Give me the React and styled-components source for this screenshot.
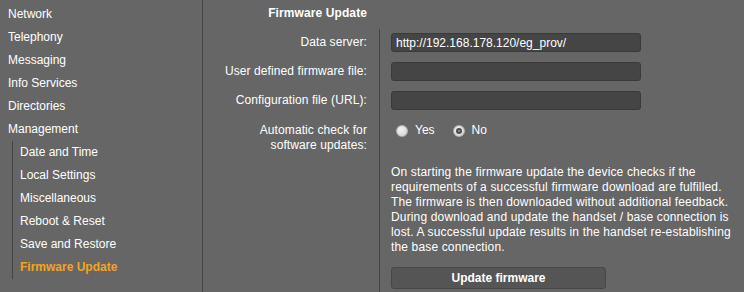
import { Fragment } from "react"
import { createGlobalStyle, styled, css } from "styled-components"

const bg = '#666666';
const line = '#444444';
const text = '#ffffff';
const accent = '#f5a31f';

const GlobalStyle = createGlobalStyle`
  html, body {
    margin: 0;
    padding: 0;
    background: ${bg};
  }
  body {
    font-family: "Liberation Sans", Arial, sans-serif;
    font-size: 12px;
    color: ${text};
  }
`

const Page = styled.div`
  display: flex;
  width: 744px;
  height: 292px;
  overflow: hidden;
`

const Sidebar = styled.nav`
  width: 203px;
  flex-shrink: 0;
  box-sizing: border-box;
  border-right: 1px solid ${line};
  padding-top: 3px;
`

const NavItem = styled.div`
  line-height: 23px;
  padding-left: 8px;
  color: ${({active}) => active ? accent : text};
  ${({active}) => active && css`font-weight: bold;`}
`

const SubNav = styled.div`
  margin-left: 12px;
  border-left: 1px solid ${line};

  ${NavItem} {
    padding-left: 7px;
  }
`

const Main = styled.main`
  flex: 1;
  display: grid;
  grid-template-columns: 177px 1fr;
  grid-auto-rows: min-content;
  align-content: start;
`

const LabelCell = styled.div`
  box-sizing: border-box;
  text-align: right;
  padding-right: 12px;
  border-right: 1px solid ${({plain}) => plain ? 'transparent' : line};
  line-height: ${({multi}) => multi ? '15px' : '19px'};
  padding-top: ${({top}) => top}px;
  height: ${({h}) => h ? `${h}px` : 'auto'};
  letter-spacing: 0.1px;
`

const Heading = styled.div`
  font-weight: bold;
  line-height: 23px;
`

const FieldCell = styled.div`
  padding-left: 11px;
  padding-top: ${({top}) => top}px;
  height: ${({h}) => h ? `${h}px` : 'auto'};
  box-sizing: border-box;
`

const TextInput = styled.input`
  display: block;
  box-sizing: border-box;
  width: 250px;
  height: 19px;
  margin: 0;
  padding: 0 4px;
  background: #454545;
  border: 1px solid #3a3a3a;
  border-radius: 3px;
  color: ${text};
  font: 12px "Liberation Sans", Arial, sans-serif;
  outline: none;
`

const RadioGroup = styled.div`
  display: flex;
  align-items: center;
  gap: 18px;
  line-height: 15px;
  padding-left: 5px;
`

const RadioOption = styled.label`
  display: flex;
  align-items: center;
  gap: 7px;
`

const RadioDot = styled.span`
  position: relative;
  width: 12px;
  height: 12px;
  border-radius: 50%;
  background: radial-gradient(circle at 40% 35%, #f2f2f2, #cfcfcf);
  box-sizing: border-box;
  border: 1px solid #b0b0b0;

  ${({checked}) => checked && css`
    &::after {
      content: "";
      position: absolute;
      left: 2px;
      top: 2px;
      width: 6px;
      height: 6px;
      box-sizing: border-box;
      border-radius: 50%;
      border: 2px solid #4e4e4e;
      background: #9a9a9a;
    }
  `}
`

const Info = styled.p`
  width: 360px;
  margin: 27px 0 0;
  line-height: 15px;
  letter-spacing: 0.15px;
  white-space: nowrap;
`

const Button = styled.button`
  display: block;
  box-sizing: border-box;
  width: 215px;
  height: 22px;
  margin-top: 12px;
  background: #555555;
  border: 1px solid #474747;
  border-radius: 3px;
  color: ${text};
  font: bold 12px "Liberation Sans", Arial, sans-serif;
  padding: 0;
`

const topMenu = ['Network', 'Telephony', 'Messaging', 'Info Services', 'Directories', 'Management']
const subMenu = ['Date and Time', 'Local Settings', 'Miscellaneous', 'Reboot & Reset', 'Save and Restore', 'Firmware Update']

const fields = [
  { label: 'Data server:', value: 'http://192.168.178.120/eg_prov/' },
  { label: 'User defined firmware file:', value: '' },
  { label: 'Configuration file (URL):', value: '' },
]

const infoLines = [
  'On starting the firmware update the device checks if the',
  'requirements of a successful firmware download are fulfilled.',
  'The firmware is then downloaded without additional feedback.',
  'During download and update the handset / base connection is',
  'lost. A successful update results in the handset re-establishing',
  'the base connection.',
]

export default function App() {
  return (
    <Page>
      <GlobalStyle />
      <Sidebar>
        {topMenu.map(item => <NavItem key={item}>{item}</NavItem>)}
        <SubNav>
          {subMenu.map(item => (
            <NavItem key={item} active={item === 'Firmware Update'}>{item}</NavItem>
          ))}
        </SubNav>
      </Sidebar>

      <Main>
        <LabelCell plain top={2} h={29}>
          <Heading>Firmware Update</Heading>
        </LabelCell>
        <FieldCell h={29} />

        {fields.map(f => (
          <Fragment key={f.label}>
            <LabelCell top={4} h={29}>{f.label}</LabelCell>
            <FieldCell top={4} h={29}>
              <TextInput defaultValue={f.value} readOnly />
            </FieldCell>
          </Fragment>
        ))}

        <LabelCell multi top={7} h={176}>
          Automatic check for<br />software updates:
        </LabelCell>
        <FieldCell top={7}>
          <RadioGroup>
            <RadioOption><RadioDot />Yes</RadioOption>
            <RadioOption><RadioDot checked />No</RadioOption>
          </RadioGroup>
          <Info>
            {infoLines.map((l, i) => (
              <Fragment key={i}>{l}{i < infoLines.length - 1 && <br />}</Fragment>
            ))}
          </Info>
          <Button>Update firmware</Button>
        </FieldCell>
      </Main>
    </Page>
  )
}
